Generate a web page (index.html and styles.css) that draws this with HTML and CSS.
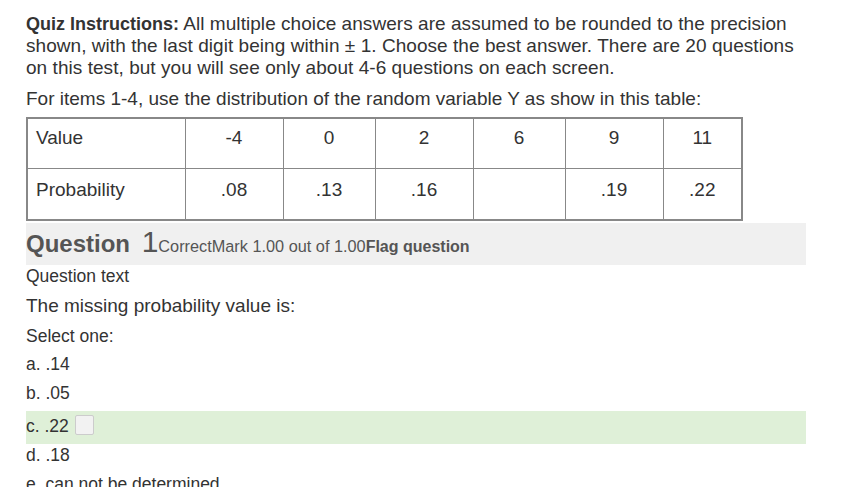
FILE: index.html
```html
<!DOCTYPE html>
<html>
<head>
<meta charset="utf-8">
<link rel="stylesheet" href="styles.css">
</head>
<body>
<div class="page">
  <p class="instructions"><strong>Quiz Instructions:</strong> All multiple choice answers are assumed to be rounded to the precision shown, with the last digit being within ± 1. Choose the best answer. There are 20 questions on this test, but you will see only about 4-6 questions on each screen.</p>
  <p class="intro">For items 1-4, use the distribution of the random variable Y as show in this table:</p>
  <table class="dist">
    <colgroup>
      <col class="c0"><col class="c1"><col class="c2"><col class="c3"><col class="c4"><col class="c5"><col class="c6">
    </colgroup>
    <tr class="r1">
      <td class="label">Value</td><td>-4</td><td>0</td><td>2</td><td>6</td><td>9</td><td>11</td>
    </tr>
    <tr class="r2">
      <td class="label">Probability</td><td>.08</td><td>.13</td><td>.16</td><td></td><td>.19</td><td>.22</td>
    </tr>
  </table>
  <div class="qheader">
    <span class="qtitle">Question <span class="qno">1</span></span><span class="qstate">Correct</span><span class="qgrade">Mark 1.00 out of 1.00</span><span class="qflag">Flag question</span>
  </div>
  <div class="qlabel">Question text</div>
  <div class="qtext">The missing probability value is:</div>
  <div class="prompt">Select one:</div>
  <div class="answer">
    <div class="opt">a. .14</div>
    <div class="opt">b. .05</div>
    <div class="opt correct">c. .22 <span class="check"></span></div>
    <div class="opt">d. .18</div>
    <div class="opt">e. can not be determined</div>
  </div>
</div>
</body>
</html>
```
FILE: styles.css
```css
html, body {
  margin: 0;
  padding: 0;
  background: #fff;
}
body {
  font-family: "Liberation Sans", Arial, sans-serif;
  color: #333;
  overflow: hidden;
}
.page {
  padding: 13px 40px 0 26px;
  width: 780px;
}
.instructions {
  margin: 0;
  font-size: 19px;
  line-height: 22px;
  letter-spacing: 0.05px;
}
.instructions strong {
  color: #333;
  font-size: 18px;
  letter-spacing: 0;
}
.intro {
  margin: 9px 0 0;
  font-size: 19px;
  line-height: 22px;
}
.dist {
  margin-top: 7px;
  border-collapse: collapse;
  border: 2px solid #888;
  font-size: 19px;
  line-height: 22px;
  color: #333;
}
.dist td {
  border: 1px solid #888;
  text-align: center;
  vertical-align: top;
  padding: 0;
}
.dist td.label {
  text-align: left;
  padding-left: 8px;
}
.r1 td { height: 50px; box-sizing: border-box; padding-top: 8px; }
.r2 td { height: 52px; box-sizing: border-box; padding-top: 10px; }
.c0 { width: 158px; }
.c1 { width: 98px; }
.c2 { width: 92px; }
.c3 { width: 98px; }
.c4 { width: 92px; }
.c5 { width: 98px; }
.c6 { width: 79px; }
.qheader {
  margin-top: 2px;
  background: #f0f0f0;
  height: 42px;
  display: flex;
  align-items: baseline;
  padding-top: 1px;
  box-sizing: border-box;
  color: #555;
  line-height: 36px;
}
.qtitle {
  font-size: 24px;
  font-weight: bold;
}
.qno {
  font-size: 30px;
  font-weight: normal;
  margin-left: 5px;
}
.qstate, .qgrade {
  font-size: 16.3px;
}
.qflag {
  font-size: 16px;
  font-weight: bold;
}
.qlabel {
  font-size: 17.5px;
  line-height: 22px;
}
.qtext {
  font-size: 19px;
  line-height: 22px;
  margin-top: 8px;
}
.prompt {
  font-size: 17.5px;
  line-height: 22px;
  margin-top: 8px;
}
.answer {
  margin-top: 3px;
}
.opt {
  font-size: 17.5px;
  height: 29px;
  line-height: 29px;
  display: flex;
  align-items: center;
}
.opt.correct {
  background: #dff0d8;
  height: 33px;
  line-height: 31px;
  box-sizing: border-box;
  padding-bottom: 2px;
  margin: 3px 0 -3px;
}
.check {
  display: inline-block;
  width: 19px;
  height: 20px;
  margin-left: 6px;
  margin-top: -3px;
  background: #f2f2f2;
  border: 1px solid #ccc;
  border-radius: 2px;
  box-sizing: border-box;
}
```
